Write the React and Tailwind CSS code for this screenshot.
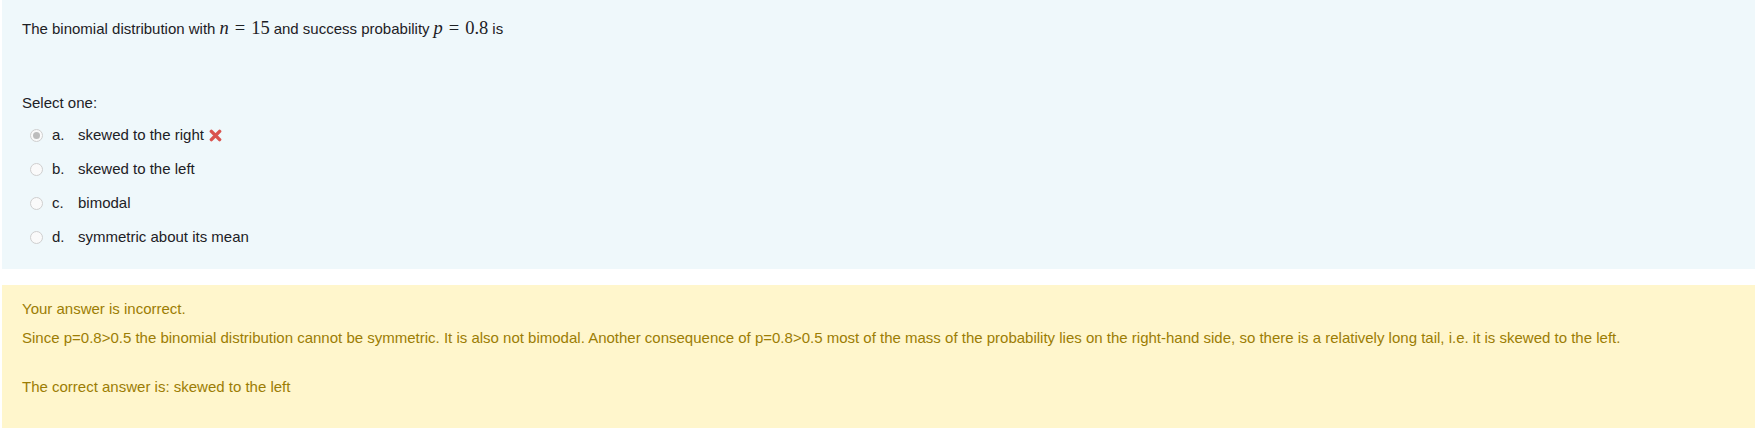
import React from 'react';

const options = [
    { letter: 'a.', text: 'skewed to the right', checked: true, wrong: true },
    { letter: 'b.', text: 'skewed to the left' },
    { letter: 'c.', text: 'bimodal' },
    { letter: 'd.', text: 'symmetric about its mean' },
];

const Radio = ({ checked }) => (
    <span className="w-[13px] h-[13px] rounded-full border border-[#cfcfcf] bg-[#fafafa] flex items-center justify-center shrink-0">
        {checked && <span className="w-[7px] h-[7px] rounded-full bg-[#bdbdbd]" />}
    </span>
);

const Cross = () => (
    <svg width="13" height="13" viewBox="0 0 12 12" className="ml-[5px] mt-[1px]">
        <path d="M2.2 2.2 L9.8 9.8 M9.8 2.2 L2.2 9.8" stroke="#d9534f" strokeWidth="3.2" strokeLinecap="round" />
    </svg>
);

const Math = ({ v, n }) => (
    <span className="font-['Liberation_Serif',serif] text-[18.5px] mx-[4px]">
        <i>{v}</i>
        <span className="mx-[6px]">=</span>
        {n}
    </span>
);

const App = () => {
    return (
        <div className="min-h-screen bg-white pl-[2px] font-['Liberation_Sans',Arial,sans-serif] text-[15px] leading-5">
            <div className="bg-[#eff8fb] text-[#1d2125] pl-[20px] pt-[18px] pb-[15px]">
                <p>
                    The binomial distribution with<Math v="n" n="15" />and success probability<Math v="p" n="0.8" />is
                </p>
                <p className="mt-[54px]">Select one:</p>
                <div className="mt-[5px]">
                    {options.map((o) => (
                        <div key={o.letter} className="h-[34px] flex items-center pl-[8px]">
                            <Radio checked={o.checked} />
                            <span className="ml-[9px] w-[26px]">{o.letter}</span>
                            <span>{o.text}</span>
                            {o.wrong && <Cross />}
                        </div>
                    ))}
                </div>
            </div>
            <div className="mt-[16px] bg-[#fff6cc] text-[#9c7d04] pl-[20px] pt-[14px] pb-[31px]">
                <p>Your answer is incorrect.</p>
                <p className="mt-[9px]">
                    Since p=0.8&gt;0.5 the binomial distribution cannot be symmetric. It is also not bimodal. Another consequence of p=0.8&gt;0.5 most of the mass of the probability lies on the right-hand side, so there is a relatively long tail, i.e. it is skewed to the left.
                </p>
                <p className="mt-[29px]">The correct answer is: skewed to the left</p>
            </div>
        </div>
    );
};

export default App;
